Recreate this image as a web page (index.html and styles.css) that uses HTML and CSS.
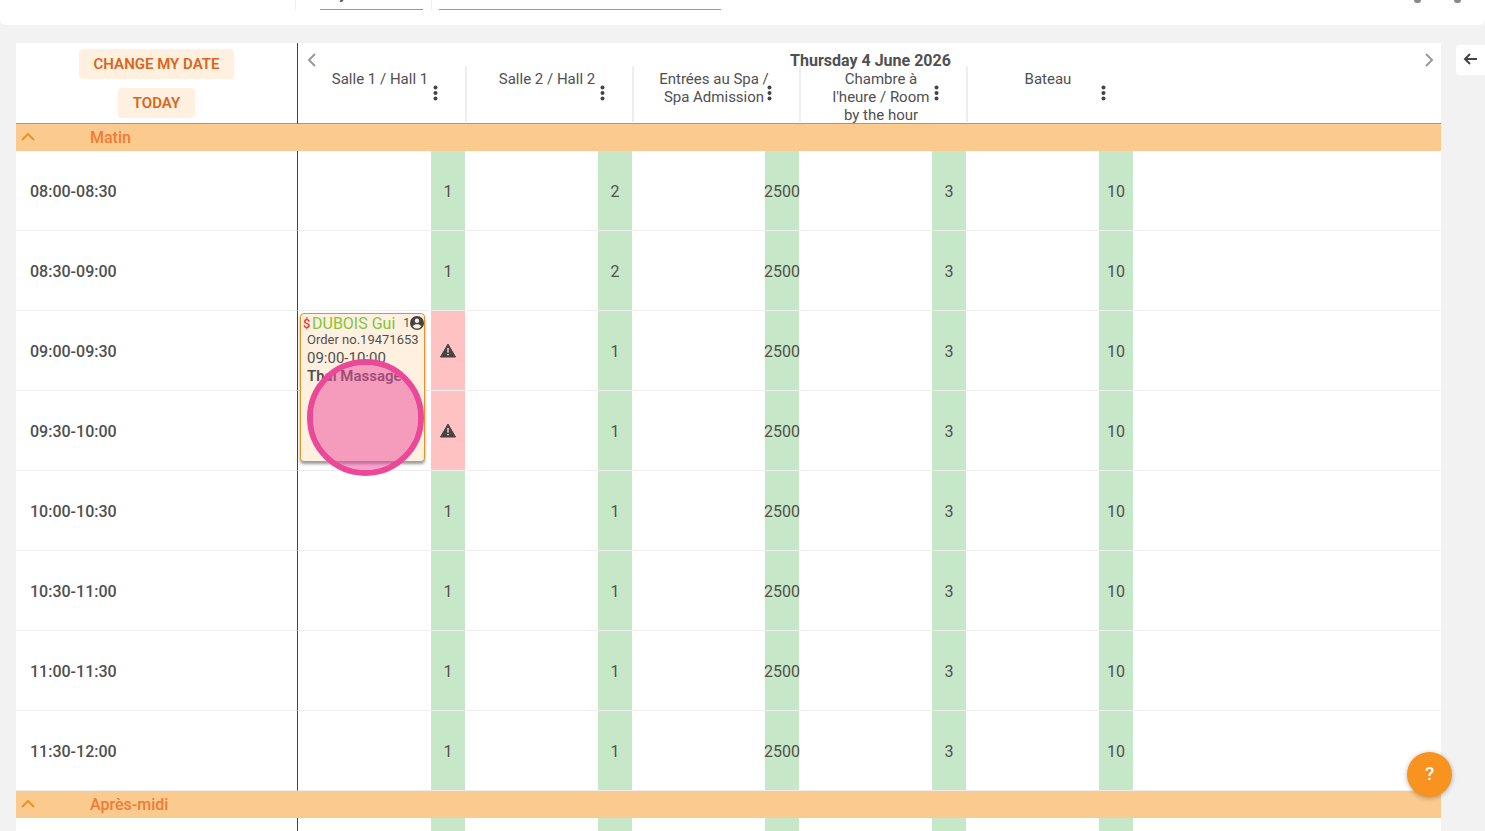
FILE: index.html
```html
<!DOCTYPE html>
<html lang="en">
<head>
  <meta charset="UTF-8">
  <title>Planning</title>
  <link rel="stylesheet" href="styles.css">
</head>
<body>
  <header class="topbar">
    <div class="topbar-left"></div>
    <div class="topbar-field"><input class="topbar-input day" type="text" value="Day" aria-label="View"></div>
    <div class="topbar-field"><input class="topbar-input activity" type="text" value="Choose a resource" aria-label="Resource"></div>
    <div class="topbar-actions">
      <span class="topbar-dot"></span>
      <span class="topbar-dot"></span>
    </div>
  </header>

  <main class="main">
    <table class="planning">
      <colgroup id="cols"></colgroup>
      <thead>
        <tr>
          <th class="corner" rowspan="2">
            <div class="corner-box">
              <button class="btn" type="button">CHANGE MY DATE</button>
              <button class="btn" type="button">TODAY</button>
            </div>
          </th>
          <th class="day-head" colspan="11">
            <div class="day-nav">
              <button class="nav" type="button" aria-label="Previous day">
                <svg width="10" height="14" viewBox="0 0 10 14"><path d="M8 1 2 7l6 6"/></svg>
              </button>
              <span>Thursday 4 June 2026</span>
              <button class="nav" type="button" aria-label="Next day">
                <svg width="10" height="14" viewBox="0 0 10 14"><path d="M2 1l6 6-6 6"/></svg>
              </button>
            </div>
          </th>
        </tr>
        <tr id="rooms"></tr>
      </thead>
      <tbody id="body"></tbody>
    </table>

    <button class="drawer" type="button" aria-label="Open panel">
      <svg width="16" height="14" viewBox="0 0 16 14"><path d="M14 6H2M7 1 2 6l5 5"/></svg>
    </button>
  </main>

  <button class="help" type="button">?</button>

  <template id="booking">
    <article class="booking">
      <div class="booking-head">
        <span class="unpaid">$</span>
        <span class="client">DUBOIS Gui</span>
        <span class="people">1</span>
        <svg class="person" width="14" height="14" viewBox="0 0 14 14">
          <circle cx="7" cy="7" r="7" fill="#444"/>
          <circle cx="7" cy="4.700" r="2.200" fill="#fff0e0"/>
          <path d="M2.800 10.200C3.600 8.600 5.500 8.200 7 8.200s3.400.4 4.200 2C10.200 11.700 8.700 12.500 7 12.500s-3.200-.8-4.200-2.300z" fill="#fff0e0"/>
        </svg>
      </div>
      <div class="booking-info">Order no.19471653</div>
      <div class="booking-info hours">09:00-10:00</div>
      <div class="booking-info service">Thai Massage</div>
    </article>
    <div class="pointer"></div>
  </template>

  <script src="script.js"></script>
</body>
</html>
```
FILE: styles.css
```css
* {
  box-sizing: border-box;
}
body {
  display: flex;
  flex-direction: column;
  margin: 0;
  height: 100vh;
  overflow: hidden;
  background: #f2f2f2;
  color: #505050;
  font-family: Roboto, "Liberation Sans", sans-serif;
  font-size: 15px;
}
button {
  border: 0;
  padding: 0;
  background: none;
  color: inherit;
  font-family: inherit;
  cursor: pointer;
}

/* top bar, scrolled almost out of view */
.topbar {
  display: flex;
  flex: none;
  align-items: flex-end;
  height: 25px;
  padding-bottom: 15px;
  background: #fff;
  border-radius: 0 0 6px 6px;
  overflow: hidden;
}
.topbar-left {
  width: 295px;
}
.topbar-field {
  padding-left: 24px;
  border-left: 1px solid #eee;
}
.topbar-field + .topbar-field {
  margin-left: 8px;
  padding-left: 7px;
}
.topbar-input {
  display: block;
  height: 32px;
  padding: 0;
  border: 0;
  border-bottom: 1px solid #999;
  background: none;
  color: #505050;
  font-family: inherit;
  font-size: 16px;
}
.day {
  width: 103px;
  font-weight: 500;
}
.activity {
  width: 282px;
  height: 30px;
  padding-left: 24px;
  color: #999;
}
.topbar-actions {
  display: flex;
  gap: 33px;
  margin-left: auto;
  padding: 0 24px 7px 0;
}
.topbar-dot {
  width: 7px;
  height: 7px;
  border-radius: 3px;
  background: #888;
}

.main {
  display: flex;
  flex: 1;
  align-items: flex-start;
  min-height: 0;
  overflow: hidden;
  padding: 18px 0 0 16px;
}
.planning {
  flex: 1;
  width: 100%;
  table-layout: fixed;
  border-collapse: separate;
  border-spacing: 0;
  background: #fff;
}
.planning th,
.planning td {
  padding: 0;
}
.col-time {
  width: 282px;
}
.col-slot {
  width: 133px;
}
.col-count {
  width: 34px;
}

/* header */
.planning .corner {
  border-right: 1px solid #444;
  border-bottom: 1px solid #999;
  vertical-align: top;
}
.corner-box {
  display: flex;
  flex-direction: column;
  align-items: center;
  gap: 9px;
  padding-top: 6px;
}
.btn {
  height: 30px;
  padding: 0 15px;
  border-radius: 4px;
  background: #fff0e0;
  color: #dd6418;
  font-size: 15px;
  font-weight: 600;
}
.day-nav {
  display: flex;
  align-items: center;
  justify-content: space-between;
  height: 23px;
  padding: 11px 7px 0 9px;
  font-size: 16px;
  font-weight: 700;
}
.nav svg {
  display: block;
  fill: none;
  stroke: #999;
  stroke-width: 2;
}
.room,
.room-rest {
  height: 58px;
  border-bottom: 1px solid #999;
  font-weight: 400;
  vertical-align: top;
}
.room-box {
  display: flex;
  align-items: flex-start;
  justify-content: flex-end;
  height: 56px;
  padding: 4px 27px 0 0;
  line-height: 18px;
}
.room + .room .room-box {
  border-left: 2px solid #eee;
}
.room-name {
  flex: none;
  width: 112px;
  margin-right: -3px;
  white-space: pre-line;
}
.menu {
  padding-top: 15px;
}
.menu svg {
  display: block;
  fill: #444;
}

/* periods */
.period th {
  height: 27px;
  background: #fbca8e;
  color: #f27b35;
  text-align: left;
}
.period-toggle {
  display: flex;
  align-items: center;
  gap: 54px;
  padding-left: 4px;
  font-size: 16px;
  font-weight: 500;
}
.period-toggle svg {
  fill: none;
  stroke: #ee9226;
  stroke-width: 2;
}

/* time rows */
.row > * {
  height: 80px;
  border-bottom: 1px solid #eee;
}
.row.empty > * {
  height: 14px;
}
.planning .time {
  padding: 1px 0 0 14px;
  border-right: 1px solid #444;
  font-size: 16px;
  font-weight: 500;
  text-align: left;
}
.slot {
  position: relative;
}
.count {
  background: #c7e8c8;
  font-size: 16px;
}
.planning .count {
  padding-top: 2px;
}
.count span {
  display: flex;
  justify-content: center;
}
.planning .full {
  padding: 0;
  background: #ffc2c3;
}

/* booking card */
.booking {
  position: absolute;
  z-index: 1;
  top: 2px;
  left: 2px;
  width: 125px;
  height: 149px;
  border: 1px solid #dd962e;
  border-radius: 4px;
  background: #fff0e0;
  box-shadow: 0 2px 3px rgba(0, 0, 0, .4);
  white-space: nowrap;
}
.booking-head {
  display: flex;
  align-items: center;
  height: 17px;
  padding: 1px 0 0 2px;
}
.unpaid {
  width: 9px;
  color: #e53935;
  font-size: 13px;
  font-weight: 500;
}
.client {
  color: #82c43c;
  font-size: 16px;
}
.people {
  margin-left: auto;
  font-size: 12px;
}
.booking-info {
  padding-left: 6px;
  font-size: 13px;
  line-height: 18px;
}
.hours,
.service {
  font-size: 15px;
}
.service {
  font-weight: 600;
}
.pointer {
  position: absolute;
  z-index: 2;
  top: 48px;
  left: 9px;
  width: 117px;
  height: 117px;
  border: 6px solid #ec4899;
  border-radius: 50%;
  background: rgba(236, 72, 153, .5);
  background-clip: padding-box;
}

.drawer {
  display: flex;
  align-items: center;
  width: 29px;
  height: 30px;
  margin: 2px 0 0 15px;
  padding-left: 7px;
  border-radius: 4px 0 0 4px;
  background: #fff;
}
.drawer svg {
  fill: none;
  stroke: #444;
  stroke-width: 2;
}
.help {
  position: fixed;
  z-index: 3;
  right: 33px;
  bottom: 34px;
  width: 45px;
  height: 45px;
  padding-bottom: 3px;
  border-radius: 50%;
  background: #f7931e;
  box-shadow: 0 1px 5px rgba(0, 0, 0, .3);
  color: #fff;
  font-size: 19px;
  font-weight: 500;
}
```
FILE: script.js
```js
var rooms = ['Salle 1 / Hall 1', 'Salle 2 / Hall 2', 'Entrées au Spa /\nSpa Admission', "Chambre à\nl'heure / Room\nby the hour", 'Bateau'];
var periods = [
  {
    name: 'Matin',
    rows: [
      ['08:00-08:30', 1, 2, 2500, 3, 10],
      ['08:30-09:00', 1, 2, 2500, 3, 10],
      ['09:00-09:30', 0, 1, 2500, 3, 10],
      ['09:30-10:00', 0, 1, 2500, 3, 10],
      ['10:00-10:30', 1, 1, 2500, 3, 10],
      ['10:30-11:00', 1, 1, 2500, 3, 10],
      ['11:00-11:30', 1, 1, 2500, 3, 10],
      ['11:30-12:00', 1, 1, 2500, 3, 10]
    ]
  },
  {
    name: 'Après-midi',
    rows: [['', '', '', '', '', '']]
  }
];
var dots = '<svg width="5" height="16" viewBox="0 0 5 16"><circle cx="2.5" cy="2.5" r="2"/><circle cx="2.5" cy="8" r="2"/><circle cx="2.5" cy="13.5" r="2"/></svg>';
var chevron = '<svg width="16" height="10" viewBox="0 0 16 10"><path d="M2 7l6-6 6 6"/></svg>';
var warning = '<svg width="16" height="16" viewBox="0 0 16 16"><path d="M8 1 15.500 14H0.500z" fill="#444" stroke="#444" stroke-linejoin="round"/><path d="M7.200 5h1.600v4.500H7.200zM7.200 10.700h1.600v1.600H7.200z" fill="#ffc2c3"/></svg>';

function drawHead () {
  var cols = '<col class="col-time">';
  var heads = '';
  rooms.forEach(function (room) {
    cols += '<col class="col-slot"><col class="col-count">';
    heads += '<th class="room" colspan="2"><div class="room-box">' +
      '<span class="room-name">' + room + '</span>' +
      '<button class="menu" type="button" aria-label="Room menu">' + dots + '</button></div></th>';
  });
  document.getElementById('cols').innerHTML = cols + '<col>';
  document.getElementById('rooms').innerHTML = heads + '<th class="room-rest"></th>';
}

function drawRow (row) {
  var html = '<tr class="row' + (row[0] ? '' : ' empty') + '"><th class="time">' + row[0] + '</th>';
  row.slice(1).forEach(function (count) {
    html += '<td class="slot"></td>';
    html += '<td class="count' + (count === 0 ? ' full' : '') + '"><span>' + (count === 0 ? warning : count) + '</span></td>';
  });
  return html + '<td></td></tr>';
}

function drawBody () {
  var html = '';
  periods.forEach(function (period) {
    html += '<tr class="period"><th colspan="12"><button class="period-toggle" type="button">' + chevron + period.name + '</button></th></tr>';
    html += period.rows.map(drawRow).join('');
  });
  document.getElementById('body').innerHTML = html;
}

drawHead();
drawBody();

// the booking starts at 09:00 in the first room
document.querySelectorAll('.row')[2].querySelector('.slot')
  .appendChild(document.getElementById('booking').content.cloneNode(true));
```
